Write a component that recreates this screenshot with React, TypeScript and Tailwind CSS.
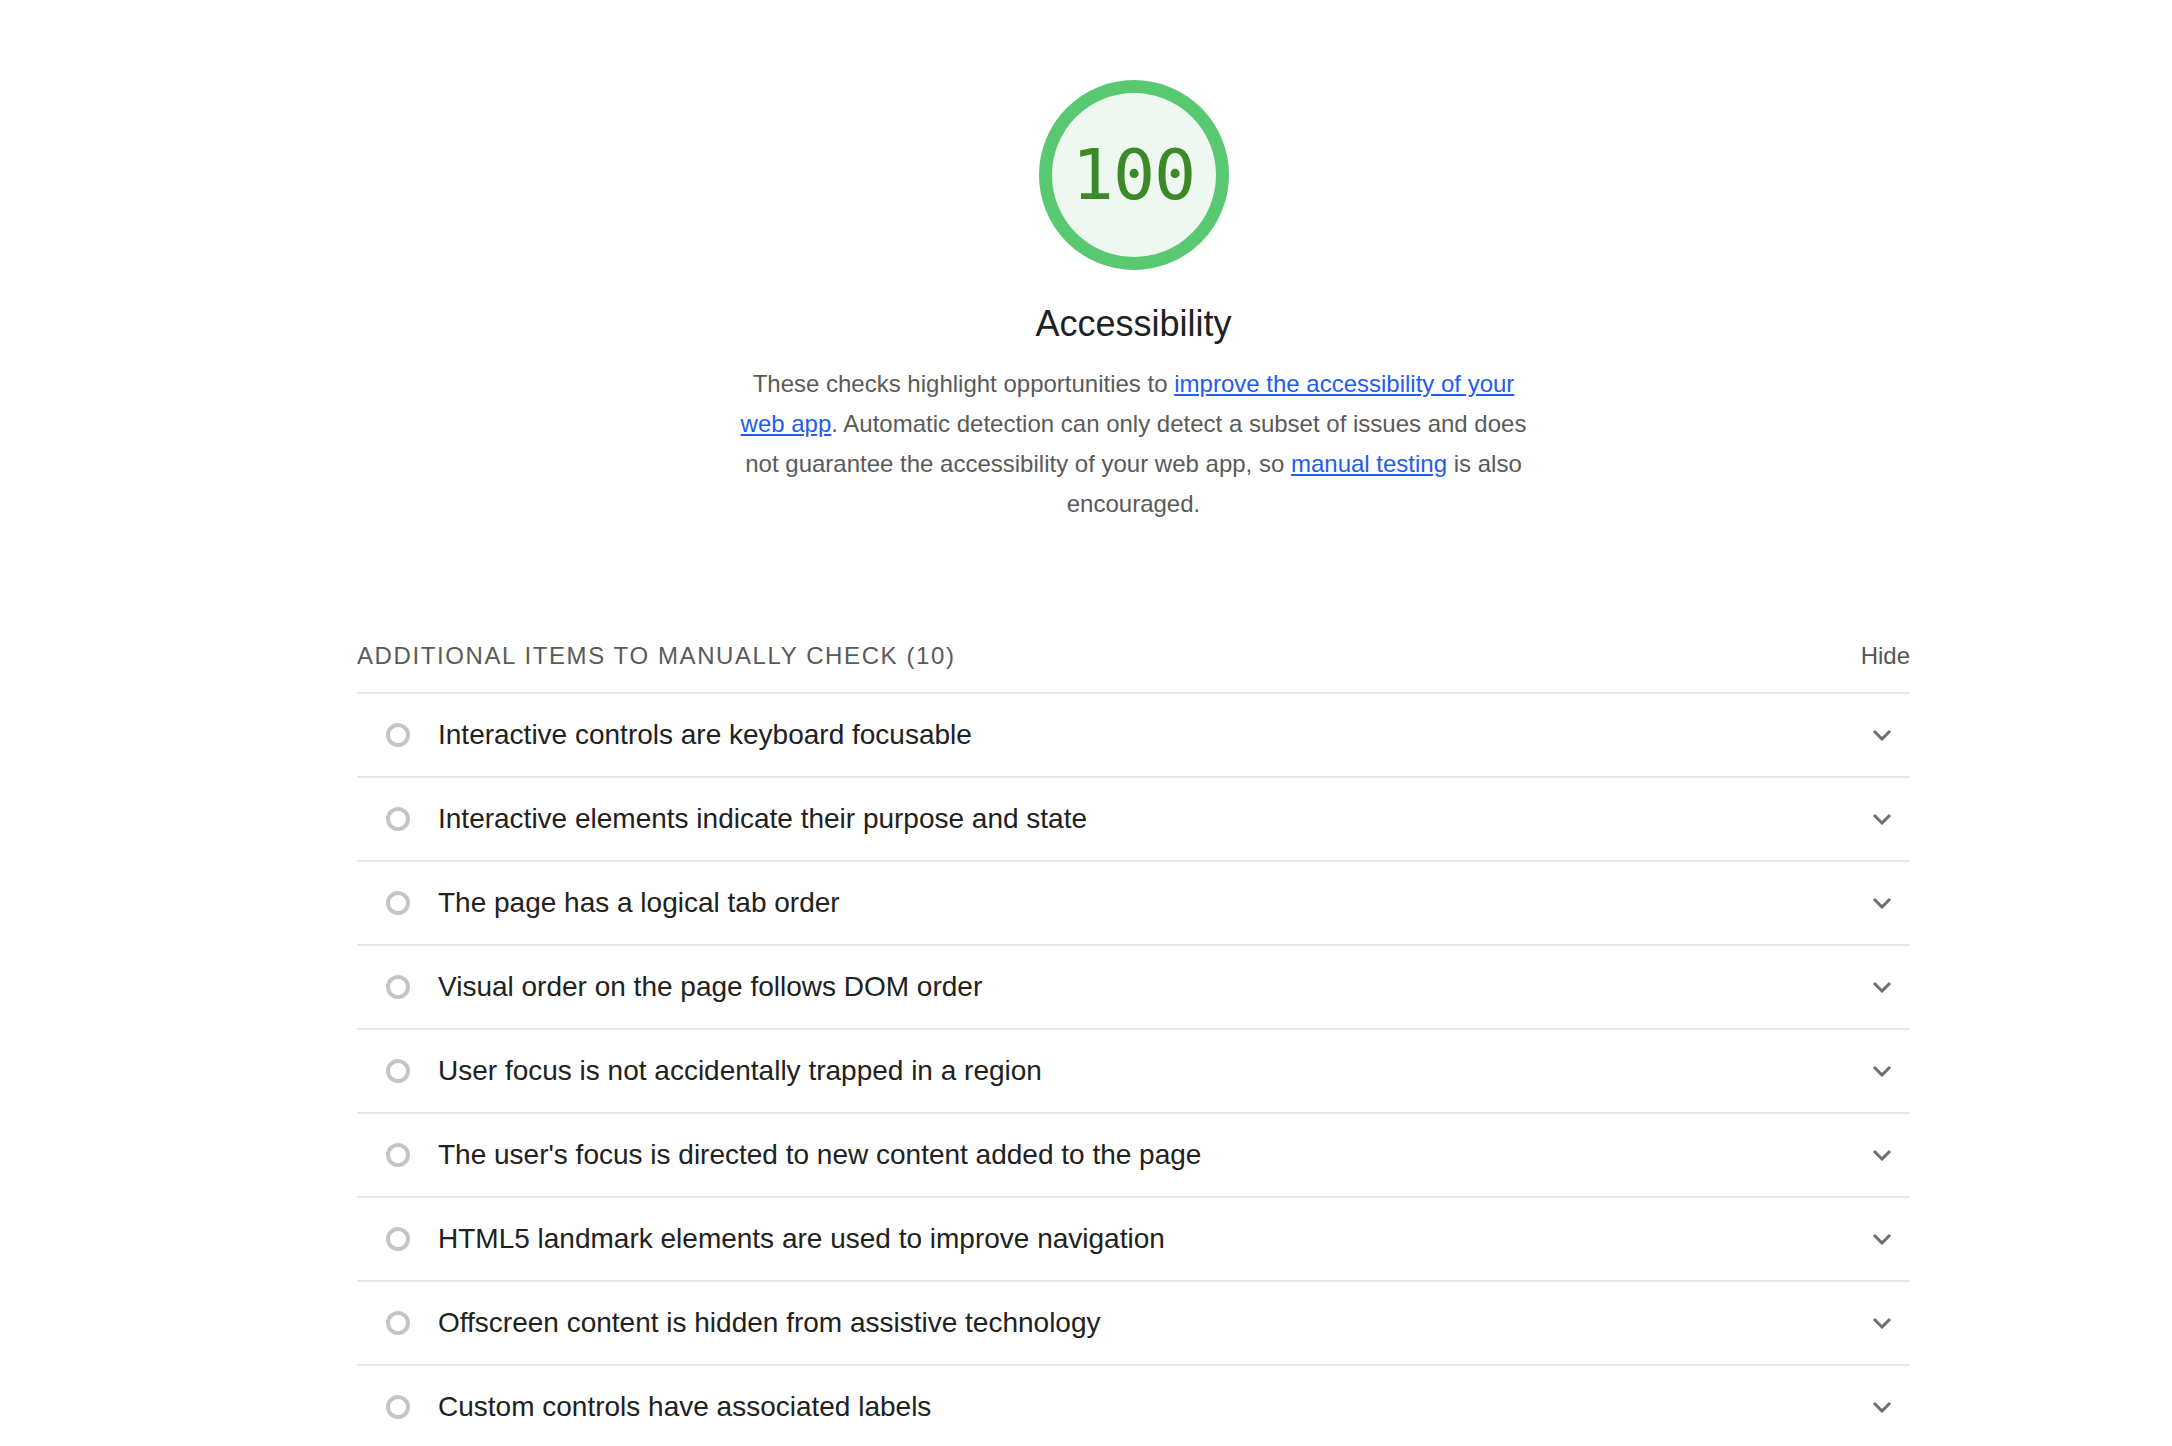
import React from "react";

const items = [
  "Interactive controls are keyboard focusable",
  "Interactive elements indicate their purpose and state",
  "The page has a logical tab order",
  "Visual order on the page follows DOM order",
  "User focus is not accidentally trapped in a region",
  "The user's focus is directed to new content added to the page",
  "HTML5 landmark elements are used to improve navigation",
  "Offscreen content is hidden from assistive technology",
  "Custom controls have associated labels",
  "Custom controls have ARIA roles",
];

function Gauge() {
  return (
    <div className="relative w-[190px] h-[190px]">
      <svg width="190" height="190" viewBox="0 0 190 190" className="absolute inset-0">
        <circle cx="95" cy="95" r="88.5" fill="#eef8f1" stroke="#59c971" strokeWidth="13" />
      </svg>
      <div className="absolute inset-0 flex items-center justify-center">
        <span
          className="text-[70px] leading-none text-[#3c8a27] tracking-[-1px]"
          style={{ fontFamily: '"DejaVu Sans Mono", monospace' }}
        >
          100
        </span>
      </div>
    </div>
  );
}

function Chevron() {
  return (
    <svg width="20" height="12" viewBox="0 0 20 12" fill="none">
      <path d="M2 2 L10 10 L18 2" stroke="#6e6e6e" strokeWidth="3" />
    </svg>
  );
}

export default function App() {
  return (
    <div
      className="min-h-screen bg-white"
      style={{ fontFamily: '"Liberation Sans", Arial, sans-serif' }}
    >
      <div className="ml-[357px] w-[1553px] flex flex-col pt-[80px]">
        <div className="flex flex-col items-center">
          <Gauge />
          <div className="mt-[32px] text-[36px] leading-[44px] text-[#202124]">Accessibility</div>
          <p className="mt-[18px] w-[800px] text-center text-[24px] leading-[40px] text-[#5a5a5a]">
            These checks highlight opportunities to{" "}
            <a className="text-[#1f5cf0] underline">improve the accessibility of your web app</a>.
            Automatic detection can only detect a subset of issues and does not guarantee the
            accessibility of your web app, so <a className="text-[#1f5cf0] underline">manual testing</a>{" "}
            is also encouraged.
          </p>
        </div>

        <div className="mt-[96px] h-[72px] flex items-center justify-between">
          <span className="text-[24px] tracking-[1.6px] text-[#5a5a5a] uppercase">
            Additional items to manually check (10)
          </span>
          <span className="text-[24px] text-[#555555]">Hide</span>
        </div>

        {items.map((t) => (
          <div
            key={t}
            className="h-[84px] border-t-2 border-[#e6e6e6] flex items-center pl-[29px] pr-[18px]"
          >
            <div className="w-[24px] h-[24px] rounded-full border-4 border-[#c4c4c4] shrink-0" />
            <div className="ml-[28px] flex-1 text-[28px] text-[#212121]">{t}</div>
            <Chevron />
          </div>
        ))}
      </div>
    </div>
  );
}
